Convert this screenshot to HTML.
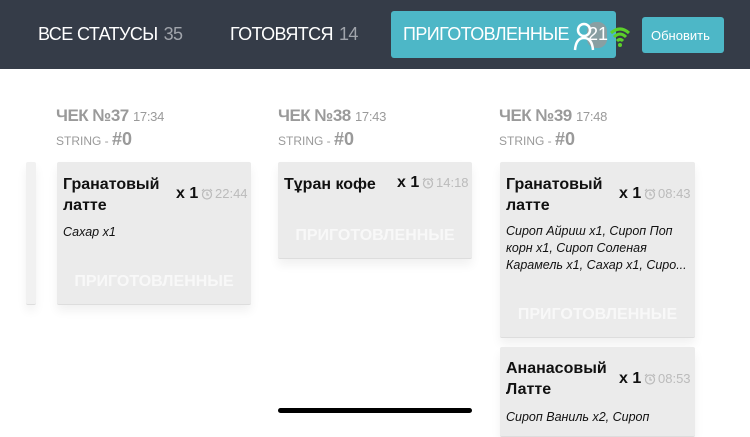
<!DOCTYPE html>
<html><head><meta charset="utf-8"><style>
*{margin:0;padding:0;box-sizing:border-box}
body{width:750px;height:422px;overflow:hidden;background:#fff;font-family:"Liberation Sans",sans-serif;position:relative}
.hdr{position:absolute;left:0;top:0;width:750px;height:69px;background:#353c48}
.t{position:absolute;white-space:nowrap}
.tab{color:#fff;font-size:18px;letter-spacing:-0.6px;top:24px}
.tab span{color:#a0a4ab;margin-left:6px}
.btn{position:absolute;background:#4db7c7;border-radius:3px}
.hd{color:#9a9a9a;font-size:17px;font-weight:bold;letter-spacing:-0.5px}
.hd span{font-size:13px;font-weight:normal;letter-spacing:-0.3px}
.st{color:#9a9a9a;font-size:12px}
.st b{font-size:18px}
.card{position:absolute;background:#ebebeb;border-radius:2px;box-shadow:0 6px 10px rgba(0,0,0,0.06);border-bottom:1px solid #ddd}
.ti{position:absolute;left:6px;font-size:16px;font-weight:bold;color:#111;line-height:21px}
.q{position:absolute;font-size:16px;font-weight:bold;color:#111}
.tm{position:absolute;font-size:13px;color:#bbb;display:flex;align-items:center;gap:2px}
.ds{position:absolute;left:6px;font-size:12.5px;font-style:italic;color:#111;line-height:17px}
.pr{position:absolute;left:0;width:100%;text-align:center;color:#f8f8f8;font-size:16px;font-weight:bold}
</style></head><body>
<div class="hdr"></div>
<div class="t tab" style="left:38px">ВСЕ СТАТУСЫ<span>35</span></div>
<div class="t tab" style="left:230px">ГОТОВЯТСЯ<span>14</span></div>
<div class="btn" style="left:391px;top:11px;width:225px;height:47px"></div>
<div class="t tab" style="left:403px">ПРИГОТОВЛЕННЫЕ</div>
<div style="position:absolute;left:587px;top:22px;width:20px;height:26px;background:#999;border-radius:9px;opacity:.8"></div>
<div class="t" style="left:588px;top:24px;color:#fff;font-size:18px">21</div>
<svg style="position:absolute;left:573px;top:21px" width="24" height="30" viewBox="0 0 24 30"><circle cx="11" cy="9" r="6" fill="none" stroke="#fff" stroke-width="2.5"/><path d="M2 29 Q3 17 11 17 Q19 17 20 29" fill="none" stroke="#fff" stroke-width="2.5"/></svg>
<svg style="position:absolute;left:609px;top:24px" width="22" height="24" viewBox="0 0 22 24"><path d="M2 9 Q11 1 20 9" fill="none" stroke="#5cd12a" stroke-width="3"/><path d="M5 13 Q11 7 17 13" fill="none" stroke="#5cd12a" stroke-width="3"/><path d="M8 17 Q11 14 14 17" fill="none" stroke="#5cd12a" stroke-width="3"/><circle cx="11" cy="21" r="2" fill="#5cd12a"/></svg>
<div class="btn" style="left:642px;top:17px;width:82px;height:36px"></div>
<div class="t" style="left:651px;top:28px;color:#fff;font-size:13px">Обновить</div>

<div class="t hd" style="left:56px;top:106px">ЧЕК №37 <span>17:34</span></div>
<div class="t st" style="left:56px;top:129px">STRING - <b>#0</b></div>
<div class="t hd" style="left:278px;top:106px">ЧЕК №38 <span>17:43</span></div>
<div class="t st" style="left:278px;top:129px">STRING - <b>#0</b></div>
<div class="t hd" style="left:499px;top:106px">ЧЕК №39 <span>17:48</span></div>
<div class="t st" style="left:499px;top:129px">STRING - <b>#0</b></div>

<div class="card" style="left:26px;top:162px;width:10px;height:143px;background:#f1f1f1"></div>

<div class="card" style="left:57px;top:162px;width:194px;height:143px">
<div class="ti" style="top:12px">Гранатовый<br>латте</div>
<div class="q" style="left:119px;top:23px">x 1</div>
<div class="tm" style="left:144px;top:24px"><svg width="12" height="12" viewBox="0 0 12 12"><circle cx="6" cy="6.5" r="4.5" fill="none" stroke="#bbb" stroke-width="1.2"/><path d="M6 4v3h2M1 3l2-2M11 3L9 1" stroke="#bbb" fill="none" stroke-width="1.2"/></svg>22:44</div>
<div class="ds" style="top:62px">Сахар x1</div>
<div class="pr" style="top:111px">ПРИГОТОВЛЕННЫЕ</div>
</div>

<div class="card" style="left:278px;top:162px;width:194px;height:97px">
<div class="ti" style="top:12px">Тұран кофе</div>
<div class="q" style="left:119px;top:12px">x 1</div>
<div class="tm" style="left:144px;top:13px"><svg width="12" height="12" viewBox="0 0 12 12"><circle cx="6" cy="6.5" r="4.5" fill="none" stroke="#bbb" stroke-width="1.2"/><path d="M6 4v3h2M1 3l2-2M11 3L9 1" stroke="#bbb" fill="none" stroke-width="1.2"/></svg>14:18</div>
<div class="pr" style="top:65px">ПРИГОТОВЛЕННЫЕ</div>
</div>

<div class="card" style="left:500px;top:162px;width:195px;height:176px">
<div class="ti" style="top:12px">Гранатовый<br>латте</div>
<div class="q" style="left:119px;top:23px">x 1</div>
<div class="tm" style="left:144px;top:24px"><svg width="12" height="12" viewBox="0 0 12 12"><circle cx="6" cy="6.5" r="4.5" fill="none" stroke="#bbb" stroke-width="1.2"/><path d="M6 4v3h2M1 3l2-2M11 3L9 1" stroke="#bbb" fill="none" stroke-width="1.2"/></svg>08:43</div>
<div class="ds" style="top:61px">Сироп Айриш x1, Сироп Поп<br>корн x1, Сироп Соленая<br>Карамель x1, Сахар x1, Сиро...</div>
<div class="pr" style="top:144px">ПРИГОТОВЛЕННЫЕ</div>
</div>

<div class="card" style="left:500px;top:347px;width:195px;height:90px">
<div class="ti" style="top:11px">Ананасовый<br>Латте</div>
<div class="q" style="left:119px;top:23px">x 1</div>
<div class="tm" style="left:144px;top:24px"><svg width="12" height="12" viewBox="0 0 12 12"><circle cx="6" cy="6.5" r="4.5" fill="none" stroke="#bbb" stroke-width="1.2"/><path d="M6 4v3h2M1 3l2-2M11 3L9 1" stroke="#bbb" fill="none" stroke-width="1.2"/></svg>08:53</div>
<div class="ds" style="top:62px">Сироп Ваниль x2, Сироп</div>
</div>

<div style="position:absolute;left:278px;top:408px;width:194px;height:5px;background:#000;border-radius:3px"></div>
</body></html>
